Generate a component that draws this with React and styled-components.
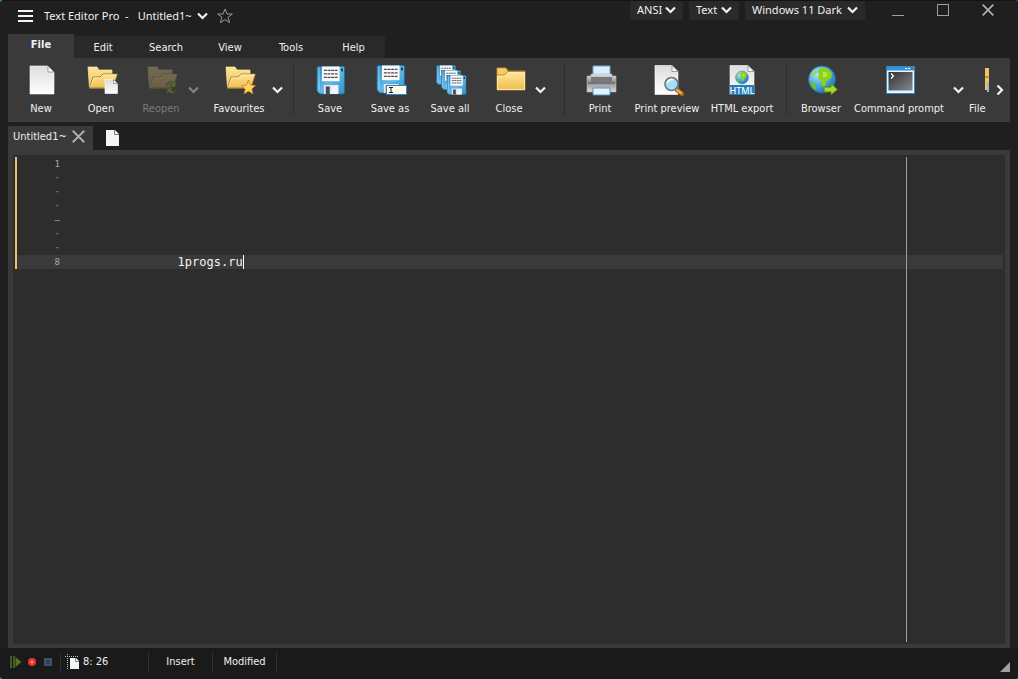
import React from "react";
import styled, { createGlobalStyle, css } from "styled-components";

const Global = createGlobalStyle`
  * { box-sizing: border-box; }
  html, body, #root { height: 100%; }
  body {
    margin: 0;
    background: linear-gradient(90deg, #1f8fd6, #1d4fb4);
    font-family: "DejaVu Sans Condensed", "Noto Sans", sans-serif;
    font-size: 11px;
    color: #f0f0f0;
  }
  button, select, textarea { font: inherit; color: inherit; border: 0; margin: 0; padding: 0; background: none; }
`;

const Window = styled.div`
  display: flex;
  flex-direction: column;
  min-height: 100%;
  background: #1f1f1f;
  border-radius: 4px;
  border-top: 1px solid #141414;
  overflow: hidden;
`;

const TitleBar = styled.header`
  display: flex;
  justify-content: space-between;
  height: 33px;
  padding: 0 15px 0 16px;
  font-family: "Noto Sans", "Open Sans", sans-serif;
`;

const TitleLeft = styled.div`
  display: flex;
  align-items: center;
  height: 30px;
  font-size: 11px;
  line-height: 14px;
`;

const IconButton = styled.button`
  display: flex;
  align-items: center;
  justify-content: center;
  width: ${(p) => p.$w || 18}px;
  height: ${(p) => p.$h || 18}px;
  flex: none;
  svg { display: block; }
`;

const AppName = styled.h1`
  margin: 0 9px 0 10px;
  font-size: 11px;
  font-weight: 400;
  white-space: pre;
`;

const DocumentButton = styled.button`
  display: flex;
  align-items: center;
  gap: 5px;
  margin-right: 8px;
`;

const TitleRight = styled.div`
  display: flex;
  align-items: flex-start;
`;

const Picker = styled.label`
  position: relative;
  display: block;
  width: ${(p) => p.$w}px;
  margin-right: 6px;
  background: #2a2a2a;
  select {
    display: block;
    width: 100%;
    height: 19px;
    padding: 0 0 2px 7px;
    appearance: none;
    outline: none;
    font-size: 11px;
  }
  option { background: #2a2a2a; }
  svg { position: absolute; right: 7px; top: 5px; pointer-events: none; }
`;

const Caption = styled.div`
  display: flex;
  gap: 28px;
  margin: 0 7px 0 18px;
`;

const MenuBar = styled.nav`
  display: flex;
  align-items: flex-end;
  height: 24px;
  padding: 0 8px;
`;

const MenuItem = styled.button`
  width: ${(p) => p.$w}px;
  height: 22px;
  background: #292929;
  ${(p) =>
    p.$active &&
    css`
      height: 24px;
      padding-bottom: 4px;
      background: #3a3a3a;
      font-weight: 700;
    `}
`;

const Ribbon = styled.div`
  display: flex;
  height: 64px;
  margin: 0 8px;
  padding-left: 3px;
  background: #3a3a3a;
  border-bottom: 1px solid #424242;
`;

const Tools = styled.div`
  display: flex;
  flex: 1;
  min-width: 0;
  overflow: hidden;
`;

const Tool = styled.button`
  display: flex;
  flex-direction: column;
  align-items: center;
  flex: none;
  width: ${(p) => p.$w || 60}px;
  padding-top: 6px;
  white-space: nowrap;
  line-height: 16px;
  color: ${(p) => (p.disabled ? "#7b7b7b" : "#f0f0f0")};
  svg { display: block; flex: none; margin: 0 0 5px 1px; opacity: ${(p) => (p.disabled ? 0.28 : 1)}; }
`;

const CutTool = styled(Tool)`
  align-items: flex-start;
  padding-left: 1px;
  svg { margin-left: 2px; }
`;

const Drop = styled.button`
  display: flex;
  justify-content: center;
  flex: none;
  width: 20px;
  margin-left: -8px;
  padding-top: 28px;
  opacity: ${(p) => (p.disabled ? 0.4 : 1)};
`;

const Divider = styled.div`
  flex: none;
  width: ${(p) => p.$w}px;
  display: flex;
  justify-content: center;
  padding: 6px 0;
  &::before { content: ""; width: 1px; background: #2c2c2c; }
`;

const Tabs = styled.div`
  display: flex;
  align-items: center;
  height: 28px;
  padding: 4px 8px 0;
`;

const Tab = styled.div`
  display: flex;
  align-items: center;
  justify-content: space-between;
  width: 85px;
  height: 24px;
  padding: 0 8px 3px 5px;
  margin-right: 12px;
  background: #3a3a3a;
  border-radius: 1px 1px 0 0;
`;

const Frame = styled.main`
  display: flex;
  flex: 1;
  margin: 0 8px;
  padding: 2px;
  background: #2d2d2d;
  border: 5px solid #3a3a3a;
  border-bottom-width: 4px;
`;

const Gutter = styled.div`
  align-self: flex-start;
  width: 47px;
  border-left: 2px solid #e6c36b;
  font-family: "DejaVu Sans Mono", monospace;
  font-size: 9px;
  line-height: 14px;
  text-align: right;
  color: #a8a8a8;
`;

const LineNo = styled.div`
  height: 14px;
  padding-right: 2px;
  background: ${(p) => (p.$current ? "#3a3a3a" : "transparent")};
`;

const Page = styled.div`
  position: relative;
  display: flex;
  flex: 1;
  background: linear-gradient(#3a3a3a, #3a3a3a) 0 98px / 100% 14px no-repeat;
`;

const Text = styled.textarea`
  flex: 1;
  width: 100%;
  resize: none;
  outline: none;
  overflow: hidden;
  font-family: "DejaVu Sans Mono", "Liberation Mono", monospace;
  font-size: 12px;
  line-height: 14px;
  color: #f4f4f4;
`;

const Caret = styled.span`
  position: absolute;
  left: 181px;
  top: 98px;
  width: 1px;
  height: 14px;
  background: #fff;
`;

const Margin = styled.span`
  position: absolute;
  right: 96px;
  top: 0;
  bottom: 0;
  width: 1px;
  background: #a0a0a0;
`;

const StatusBar = styled.footer`
  display: flex;
  align-items: center;
  height: 31px;
  padding: 0 8px 4px;
  background: #1a1a1a;
`;

const Macro = styled.div`
  display: flex;
  width: 53px;
  border-right: 1px solid #303030;
`;

const Status = styled.div`
  display: flex;
  align-items: center;
  justify-content: ${(p) => (p.$start ? "flex-start" : "center")};
  gap: 3px;
  width: ${(p) => p.$w}px;
  height: 20px;
  padding-left: ${(p) => (p.$start ? 4 : 0)}px;
  border-right: 1px solid #303030;
`;

const Grip = styled.svg`
  align-self: flex-end;
  margin-left: auto;
  margin-bottom: 3px;
`;

const Chevron = ({ side }) =>
  side ? (
    <svg width="8" height="12" viewBox="0 0 8 12">
      <path d="M1.500 1.500 6 6 1.500 10.500" fill="none" stroke="#f2f2f2" strokeWidth="2.200" />
    </svg>
  ) : (
    <svg width="11" height="8" viewBox="0 0 11 8">
      <path d="M1 1.500 5.500 6 10 1.500" fill="none" stroke="#f2f2f2" strokeWidth="2.200" />
    </svg>
  );

const Icon = ({ children }) => (
  <svg width="32" height="32" viewBox="0 0 32 32" aria-hidden="true">
    <defs>
      <linearGradient id="paper" x1="0" y1="0" x2="0" y2="1">
        <stop offset="0" stopColor="#dcdcdc" /><stop offset="1" stopColor="#ffffff" />
      </linearGradient>
      <linearGradient id="gold" x1="0" y1="0" x2="0" y2="1">
        <stop offset="0" stopColor="#ffe49a" /><stop offset="1" stopColor="#efbf4b" />
      </linearGradient>
      <linearGradient id="blue" x1="0" y1="0" x2="1" y2="1">
        <stop offset="0" stopColor="#2b86bd" /><stop offset=".5" stopColor="#61b9e8" /><stop offset="1" stopColor="#2f91ca" />
      </linearGradient>
      <radialGradient id="sea" cx=".35" cy=".3" r=".8">
        <stop offset="0" stopColor="#b8e6fb" /><stop offset=".5" stopColor="#4eaae0" /><stop offset="1" stopColor="#1c6eb0" />
      </radialGradient>
      <linearGradient id="steel" x1="0" y1="0" x2="0" y2="1">
        <stop offset="0" stopColor="#e2e4e8" /><stop offset=".45" stopColor="#8c8e92" /><stop offset="1" stopColor="#d9dce0" />
      </linearGradient>
      <linearGradient id="screen" x1="0" y1="0" x2="1" y2="1">
        <stop offset="0" stopColor="#303234" /><stop offset="1" stopColor="#85888c" />
      </linearGradient>
    </defs>
    {children}
  </svg>
);

const Sheet = ({ x = 0, y = 0, w = 24, h = 28, f = 6 }) => (
  <g transform={`translate(${x} ${y})`}>
    <path d={`M0 0H${w - f}L${w} ${f}V${h}H0Z`} fill="url(#paper)" stroke="#fff" strokeWidth=".6" />
    <path d={`M${w - f} 0V${f}H${w}Z`} fill="#fff" stroke="#777" strokeWidth=".7" />
  </g>
);

const OpenFolder = () => (
  <g>
    <path d="M2 3H11L13 6H26V24H3.500Z" fill="url(#gold)" stroke="#ffe9a8" strokeWidth=".7" />
    <path d="M3.500 24 7 13H14L17 10H31.500L27 24Z" fill="url(#gold)" stroke="#8a6b24" strokeWidth=".8" />
    <path d="M4.500 23.300 7.600 13.800H14.400L17.300 10.800H30.500" fill="none" stroke="#fff0bd" strokeWidth=".7" />
  </g>
);

const Floppy = ({ x, y, s = 1 }) => (
  <g transform={`translate(${x} ${y}) scale(${s})`}>
    <path d="M1 0H27L28 1V27L27 28H3L0 25V1Z" fill="url(#blue)" stroke="#1e6e9f" strokeWidth=".8" />
    <path d="M2 1V24" stroke="#9fdcf7" strokeWidth="1" />
    <rect x="5" y="0" width="18" height="15" fill="#fafafa" />
    <path d="M7 4H21M7 7.500H21M7 11H21" stroke="#4b4b4b" strokeWidth="1.300" strokeDasharray="3 .7" />
    <rect x="24.500" y="2" width="2" height="3" fill="#1b3d52" />
    <path d="M7 19H22V28H7Z" fill="#e3e5ef" />
    <path d="M9 20.500H13V28H9Z" fill="#444a52" />
    <path d="M16 20H21V28H14Z" fill="#fff" opacity=".6" />
  </g>
);

const Globe = ({ cx, cy, r }) => (
  <g transform={`translate(${cx} ${cy}) scale(${r / 14})`}>
    <circle r="14" fill="url(#sea)" stroke="#1f6ca5" strokeWidth=".8" />
    <path d="M-1-12C4-13 8-10 10-7L10-2 7 0 4 3 3 8 0 6-1 2-4-1-3-6-5-8Z" fill="#8bd21f" />
    <path d="M-9-8-6-10-5-7-8-4-10-3Z" fill="#9bdc4a" />
    <path d="M-12 1-9 3-6 7-6 11-10 8Z" fill="#79c21c" />
    <path d="M1-8 6-7 5-3 1-2Z" fill="#b4ea3c" />
  </g>
);

const NewIcon = () => <Icon><Sheet x={4} y={2} /></Icon>;
const OpenIcon = () => <Icon><OpenFolder /><Sheet x={19} y={15.5} w={12.5} h={14} f={4} /></Icon>;
const ReopenIcon = () => (
  <Icon>
    <OpenFolder />
    <path d="M20 22C22 16 27 17 28 19L30 17V23H24L26 21C24 19 22 20 20 22Z" fill="#9bd22c" stroke="#3b5f0c" strokeWidth=".8" />
    <path d="M31 25C29 31 24 30 23 28L21 30V24H27L25 26C27 28 29 27 31 25Z" fill="#9bd22c" stroke="#3b5f0c" strokeWidth=".8" />
  </Icon>
);
const FavouritesIcon = () => (
  <Icon>
    <OpenFolder />
    <path d="M24.500 16 26.600 21 31.500 21.500 27.800 25 29 30 24.500 27.200 20 30 21.200 25 17.500 21.500 22.400 21Z" fill="#ffd35c" stroke="#c07c18" strokeWidth=".7" />
  </Icon>
);
const SaveIcon = () => <Icon><Floppy x={2} y={2.5} s={0.98} /></Icon>;
const SaveAsIcon = () => (
  <Icon>
    <Floppy x={2} y={1.5} s={0.98} />
    <rect x="11.500" y="21.500" width="20" height="9" fill="#fffdf0" stroke="#2a89be" />
    <path d="M14 23.500H18M16 23.500V28.500M14 28.500H18" stroke="#222" fill="none" />
  </Icon>
);
const SaveAllIcon = () => (
  <Icon><Floppy x={1.5} y={1.5} s={0.68} /><Floppy x={6.5} y={6.5} s={0.68} /><Floppy x={12} y={11.5} s={0.68} /></Icon>
);
const CloseIcon = () => (
  <Icon>
    <path d="M3 4H12L14 7H31V26H3Z" fill="#f2cc66" stroke="#c9993a" strokeWidth=".8" />
    <path d="M3.500 12H11L14 8.500H30.500V25.500H3.500Z" fill="url(#gold)" stroke="#fff0b8" strokeWidth=".8" />
    <path d="M3 11H10.500L13.500 7.500H31" fill="none" stroke="#a47a28" strokeWidth=".7" />
  </Icon>
);
const PrintIcon = () => (
  <Icon>
    <path d="M8 2H25V13H8Z" fill="#d9efff" stroke="#6aa8d0" />
    <path d="M2 12H6V10H27V12H31V28H2Z" fill="url(#steel)" stroke="#b4b7bb" strokeWidth=".6" />
    <path d="M6 13H27V18H6Z" fill="#77797d" /><path d="M3 19H30" stroke="#55585b" />
    <path d="M8 24H25V31H8Z" fill="#e6f4ff" stroke="#4f94c4" />
  </Icon>
);
const PreviewIcon = () => (
  <Icon>
    <Sheet x={3} y={1.5} w={23} h={29} />
    <path d="M25 26 30 30" stroke="#a86212" strokeWidth="4.500" strokeLinecap="round" />
    <path d="M25 26 29 29" stroke="#f0ad42" strokeWidth="2.500" strokeLinecap="round" />
    <circle cx="19.500" cy="20" r="6.500" fill="#a9dcf5" stroke="#637988" strokeWidth="1.600" />
    <path d="M15.500 19C16 16 19 15 21 16" fill="none" stroke="#fff" strokeWidth="1.500" />
  </Icon>
);
const HtmlIcon = () => (
  <Icon>
    <Sheet x={3} y={1.5} w={24} h={29} />
    <Globe cx={15} cy={13.5} r={6.500} />
    <rect x="3" y="21" width="24" height="10" fill="#217fbd" />
    <text x="15" y="29.500" textAnchor="middle" fontFamily="Noto Sans, sans-serif" fontSize="9" fontWeight="500" fill="#fff">HTML</text>
  </Icon>
);
const BrowserIcon = () => (
  <Icon>
    <Globe cx={16} cy={15.5} r={13.500} />
    <path d="M18 23H25V19.500L31.500 25.500 25 31V28H18Z" fill="#a6d92c" stroke="#4b7a10" strokeWidth=".9" />
  </Icon>
);
const CommandIcon = () => (
  <Icon>
    <rect x="2.500" y="2.500" width="28" height="27" fill="#e9f5fd" stroke="#2b8bc6" />
    <rect x="3" y="3" width="27" height="3.500" fill="#2e94d2" />
    <path d="M21 4.500H23M24 4.500H26" stroke="#fff" /><path d="M27 4.500H29.500" stroke="#e0462e" strokeWidth="2" />
    <rect x="4.500" y="8" width="24" height="18.500" fill="url(#screen)" />
    <path d="M7 9.500 9.500 12 7 14.500" fill="none" stroke="#fff" strokeWidth="1.300" />
  </Icon>
);
const FileIcon = () => (
  <svg width="18" height="32" viewBox="0 0 18 32" aria-hidden="true">
    <path d="M14 4H18V26H14Z" fill="#efc45b" /><path d="M14 13H18" stroke="#8a6420" />
    <path d="M16 18H18V28H16Z" fill="#9fb2d6" />
  </svg>
);

const groups = [
  [
    { label: "New", icon: NewIcon },
    { label: "Open", icon: OpenIcon },
    { label: "Reopen", icon: ReopenIcon, drop: true, disabled: true },
    { label: "Favourites", icon: FavouritesIcon, w: 72, drop: true },
  ],
  [
    { label: "Save", icon: SaveIcon },
    { label: "Save as", icon: SaveAsIcon },
    { label: "Save all", icon: SaveAllIcon },
    { label: "Close", icon: CloseIcon, w: 58, drop: true },
  ],
  [
    { label: "Print", icon: PrintIcon, w: 44 },
    { label: "Print preview", icon: PreviewIcon, w: 90 },
    { label: "HTML export", icon: HtmlIcon, w: 60 },
  ],
  [
    { label: "Browser", icon: BrowserIcon, w: 42 },
    { label: "Command prompt", icon: CommandIcon, w: 114, drop: true },
  ],
];
const dividers = [13, 28, 28];
const menus = [["File", 66], ["Edit", 58], ["Search", 68], ["View", 60], ["Tools", 62], ["Help", 63]];
const lineMarks = ["1", "·", "·", "·", "–", "·", "·", "8"];

const Cross = ({ size }) => (
  <svg width={size} height={size} viewBox="0 0 12 12">
    <path d="M.7.7 11.300 11.300M11.300.7.7 11.300" stroke="#b0b0b0" strokeWidth="1.700" />
  </svg>
);

const Choice = ({ name, value, w }) => (
  <Picker $w={w}>
    <select aria-label={name} defaultValue={value}><option>{value}</option></select>
    <Chevron />
  </Picker>
);

export default function App() {
  return (
    <>
      <Global />
      <Window>
        <TitleBar>
          <TitleLeft>
            <IconButton aria-label="Menu">
              <svg width="16" height="14" viewBox="0 0 16 14"><path d="M1 2H16M1 7H16M1 12H16" stroke="#f4f4f4" strokeWidth="2" /></svg>
            </IconButton>
            <AppName>Text Editor Pro  -</AppName>
            <DocumentButton>Untitled1~ <Chevron /></DocumentButton>
            <IconButton aria-label="Add to favourites">
              <svg width="16" height="16" viewBox="0 0 16 16"><path d="M8 1 10 6H15.300L11 9.300 12.600 14.700 8 11.500 3.400 14.700 5 9.300.7 6H6Z" fill="none" stroke="#989898" /></svg>
            </IconButton>
          </TitleLeft>
          <TitleRight>
            <Choice name="Encoding" value="ANSI" w={53} />
            <Choice name="Highlighter" value="Text" w={50} />
            <Choice name="Theme" value="Windows 11 Dark" w={120} />
            <Caption>
              <IconButton $w={17} aria-label="Minimize"><svg width="12" height="12"><path d="M0 11.500H12" stroke="#a0a0a0" /></svg></IconButton>
              <IconButton $w={17} aria-label="Maximize"><svg width="12" height="12"><rect x=".5" y=".5" width="11" height="11" fill="none" stroke="#a0a0a0" /></svg></IconButton>
              <IconButton $w={17} aria-label="Close window"><Cross size={12} /></IconButton>
            </Caption>
          </TitleRight>
        </TitleBar>
        <MenuBar>
          {menus.map(([label, w], i) => <MenuItem key={label} $w={w} $active={i === 0}>{label}</MenuItem>)}
        </MenuBar>
        <Ribbon>
          <Tools>
            {groups.map((group, g) => (
              <React.Fragment key={g}>
                {g > 0 && <Divider $w={dividers[g - 1]} />}
                {group.map(({ label, icon: Glyph, w, drop, disabled }) => (
                  <React.Fragment key={label}>
                    <Tool $w={w} disabled={disabled}><Glyph />{label}</Tool>
                    {drop && <Drop disabled={disabled} aria-label={`${label} options`}><Chevron /></Drop>}
                  </React.Fragment>
                ))}
              </React.Fragment>
            ))}
            <CutTool $w={22}><FileIcon />File</CutTool>
          </Tools>
          <IconButton $w={20} $h={64} aria-label="Scroll tools"><Chevron side /></IconButton>
        </Ribbon>
        <Tabs>
          <Tab>
            <span>Untitled1~</span>
            <IconButton $w={14} $h={14} aria-label="Close tab"><Cross size={13} /></IconButton>
          </Tab>
          <IconButton $w={14} aria-label="New tab">
            <svg width="13" height="16" viewBox="0 0 13 16"><path d="M0 0H9L13 4V16H0Z" fill="#f5f5f5" /><path d="M8.500 0V4.500H13" fill="none" stroke="#777" /></svg>
          </IconButton>
        </Tabs>
        <Frame>
          <Gutter>
            {lineMarks.map((mark, i) => <LineNo key={i} $current={i === 7}>{mark}</LineNo>)}
          </Gutter>
          <Page>
            <Text aria-label="Document text" spellCheck={false} defaultValue={"\n".repeat(7) + " ".repeat(16) + "1progs.ru"} />
            <Caret />
            <Margin />
          </Page>
        </Frame>
        <StatusBar>
          <Macro>
            <IconButton $w={16} aria-label="Play macro"><svg width="12" height="12"><path d="M1 0V12M4 0V12" stroke="#56702a" strokeWidth="1.500" /><path d="M5.500 1 11.500 6 5.500 11Z" fill="#56702a" /></svg></IconButton>
            <IconButton $w={16} aria-label="Record macro"><svg width="10" height="10"><circle cx="5" cy="5" r="4" fill="#e8342c" /><circle cx="5" cy="5" r="1.500" fill="#ff8a78" /></svg></IconButton>
            <IconButton $w={16} aria-label="Stop macro"><svg width="8" height="8"><rect width="8" height="8" fill="#3b526c" /><rect x="2" y="2" width="4" height="4" fill="#2e4058" /></svg></IconButton>
          </Macro>
          <Status $w={88} $start>
            <svg width="15" height="16" viewBox="0 0 15 16">
              <path d="M0 2.500H14M2.500 0V15" stroke="#a5c8d8" strokeDasharray="1 1" />
              <path d="M5 4H11L14 7V15H5Z" fill="#f5f5f5" /><path d="M10.500 4V7.500H14" fill="none" stroke="#888" />
            </svg>
            8: 26
          </Status>
          <Status $w={64}>Insert</Status>
          <Status $w={64}>Modified</Status>
          <Grip width="10" height="10"><path d="M10 0V10H0Z" fill="#a0a0a0" /></Grip>
        </StatusBar>
      </Window>
    </>
  );
}
